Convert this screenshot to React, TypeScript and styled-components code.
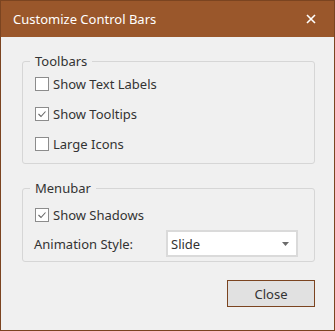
import React from "react";
import styled, { createGlobalStyle } from "styled-components";

const GlobalStyle = createGlobalStyle`
  html, body {
    margin: 0;
    padding: 0;
    background: #f0f0f0;
  }
  body {
    font-family: "Noto Sans", "Open Sans", sans-serif;
    font-size: 13px;
    color: #333333;
  }
  *, *:before, *:after {
    box-sizing: border-box;
  }
`;

const Window = styled.div`
  width: 335px;
  height: 331px;
  border: 1px solid #7b4420;
  background: #f0f0f0;
  display: flex;
  flex-direction: column;
`;

const TitleBar = styled.div`
  height: 36px;
  flex: none;
  background: #9a572b;
  color: #ffffff;
  display: flex;
  align-items: center;
  justify-content: space-between;
  padding: 0 17px 0 12px;
  font-size: 13px;
`;

const CloseX = styled.button`
  border: none;
  background: transparent;
  padding: 0;
  width: 12px;
  height: 12px;
  display: flex;
  align-items: center;
  justify-content: center;
`;

const Body = styled.div`
  flex: 1;
  display: flex;
  flex-direction: column;
  padding: 16px 19px 0 21px;
`;

const Group = styled.fieldset<{ $gap?: number }>`
  margin: ${(p) => p.$gap ?? 0}px 0 0;
  border: 1px solid #d6d6d6;
  border-radius: 3px;
  padding: 0 12px 4px 12px;
  display: flex;
  flex-direction: column;
`;

const Legend = styled.legend`
  padding: 0 5px;
  margin-left: -5px;
  line-height: 16px;
  font-size: 13px;
`;

const Spacer = styled.div<{ $h: number }>`
  height: ${(p) => p.$h}px;
  flex: none;
`;

const CheckRow = styled.label`
  height: 30px;
  display: flex;
  align-items: center;
  gap: 4px;
`;

const Box = styled.span`
  width: 14px;
  height: 14px;
  border: 1px solid #8c8c8c;
  background: #ffffff;
  display: flex;
  align-items: center;
  justify-content: center;
`;

const FieldRow = styled.div`
  height: 27px;
  display: flex;
  align-items: center;
`;

const FieldLabel = styled.span`
  width: 132px;
  margin-left: -1px;
`;

const Select = styled.div`
  width: 132px;
  height: 27px;
  border: 2px solid #dadada;
  background: #ffffff;
  display: flex;
  align-items: center;
  justify-content: space-between;
  padding: 0 7px 0 3px;
`;

const Footer = styled.div`
  display: flex;
  justify-content: flex-end;
  margin-top: 18px;
`;

const Button = styled.button`
  width: 88px;
  height: 27px;
  border: 1px solid #7b4420;
  background: #e1e1e1;
  color: #333333;
  font-family: inherit;
  font-size: 13px;
  padding: 0;
`;

const Check = ({ checked, label }: { checked?: boolean; label: string }) => (
  <CheckRow>
    <Box>
      {checked && (
        <svg width="10" height="10" viewBox="0 0 10 10">
          <path d="M1.5 5 L4 7.5 L8.5 2.5" fill="none" stroke="#666" strokeWidth="1.1" />
        </svg>
      )}
    </Box>
    {label}
  </CheckRow>
);

export default function App() {
  return (
    <>
      <GlobalStyle />
      <Window>
        <TitleBar>
          <span>Customize Control Bars</span>
          <CloseX aria-label="Close">
            <svg width="10" height="10" viewBox="0 0 10 10">
              <path d="M1 1 L9 9 M9 1 L1 9" stroke="#fff" strokeWidth="1.6" />
            </svg>
          </CloseX>
        </TitleBar>
        <Body>
          <Group>
            <Legend>Toolbars</Legend>
            <Check label="Show Text Labels" />
            <Check checked label="Show Tooltips" />
            <Check label="Large Icons" />
          </Group>
          <Group $gap={16}>
            <Legend>Menubar</Legend>
            <Spacer $h={4} />
            <Check checked label="Show Shadows" />
            <FieldRow>
              <FieldLabel>Animation Style:</FieldLabel>
              <Select>
                <span>Slide</span>
                <svg width="7" height="4" viewBox="0 0 7 4">
                  <path d="M0 0 H7 L3.5 4 Z" fill="#6b6b6b" />
                </svg>
              </Select>
            </FieldRow>
          </Group>
          <Footer>
            <Button>Close</Button>
          </Footer>
        </Body>
      </Window>
    </>
  );
}
